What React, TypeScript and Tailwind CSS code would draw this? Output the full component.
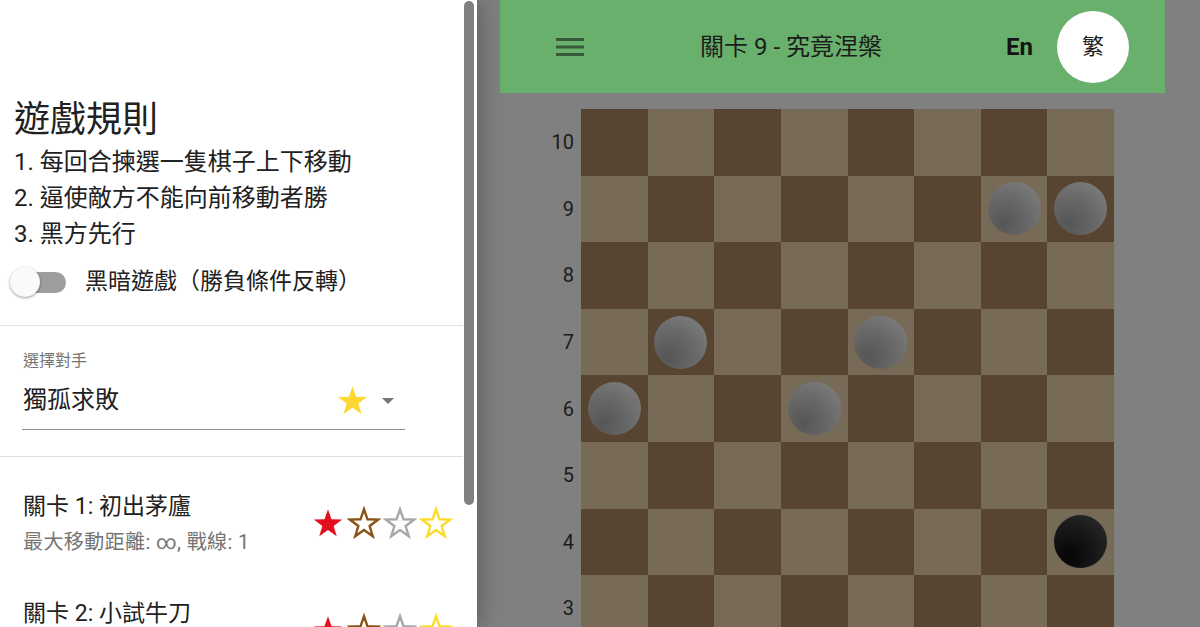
import React from 'react'

const STAR_POINTS = '12,2.3 14.47,9.4 21.99,9.56 15.99,14.1 18.17,21.29 12,17 5.83,21.29 8.01,14.1 2.01,9.56 9.53,9.4'

function Star({ color, filled, size = 34 }: { color: string; filled?: boolean; size?: number }) {
  return (
    <svg width={size} height={size} viewBox="0 0 24 24">
      {filled ? (
        <polygon points={STAR_POINTS} fill={color} />
      ) : (
        <polygon points={STAR_POINTS} fill="none" stroke={color} strokeWidth={1.7} strokeLinejoin="miter" />
      )}
    </svg>
  )
}

const levels = [
  { title: '關卡 1: 初出茅廬', sub: '最大移動距離: ∞, 戰線: 1' },
  { title: '關卡 2: 小試牛刀', sub: '最大移動距離: ∞, 戰線: 2' },
]

// 棋子位置 row-col
const greyPieces = ['9-6', '9-7', '7-1', '7-4', '6-0', '6-3']
const blackPieces = ['4-7']

function Board() {
  const rows = [10, 9, 8, 7, 6, 5, 4, 3, 2, 1]
  const cols = [0, 1, 2, 3, 4, 5, 6, 7]
  return (
    <div className="mt-[16px] flex">
      <div className="flex w-[81px] flex-col">
        {rows.map((r) => (
          <div key={r} className="flex h-[66.6px] items-center justify-end pr-[7px] text-[20px] text-[#1c1c1c]">
            {r}
          </div>
        ))}
      </div>
      <div className="grid w-[533px] grid-cols-8">
        {rows.map((r) =>
          cols.map((c) => {
            const dark = (r + c) % 2 === 0
            const key = `${r}-${c}`
            return (
              <div
                key={key}
                className={`flex h-[66.6px] items-center justify-center ${dark ? 'bg-[#574431]' : 'bg-[#776b58]'}`}
              >
                {greyPieces.includes(key) && (
                  <div className="h-[53px] w-[53px] rounded-full bg-[radial-gradient(circle_at_28%_78%,#565656_0%,#676767_45%,#7c7c7c_85%)]" />
                )}
                {blackPieces.includes(key) && (
                  <div className="h-[53px] w-[53px] rounded-full bg-[radial-gradient(circle_at_28%_78%,#050505_0%,#161616_45%,#262727_85%)]" />
                )}
              </div>
            )
          })
        )}
      </div>
    </div>
  )
}

export default function App() {
  return (
    <div
      className="flex h-[627px] w-[1200px] overflow-hidden bg-[#808080]"
      style={{ fontFamily: 'Roboto, "Noto Sans CJK TC", sans-serif' }}
    >
      {/* 側邊選單 */}
      <div className="relative z-10 w-[477px] shrink-0 bg-white shadow-[6px_0_18px_rgba(0,0,0,0.22)]">
        <div className="absolute left-[464px] top-[1px] h-[504px] w-[10px] rounded-full bg-[#808080]" />

        <div className="px-[14px] pt-[99px] text-[#212121]">
          <h2 className="text-[36px] leading-[42px]">遊戲規則</h2>
          <ol className="mt-[3px] text-[24px] leading-[36px]">
            <li>1. 每回合揀選一隻棋子上下移動</li>
            <li>2. 逼使敵方不能向前移動者勝</li>
            <li>3. 黑方先行</li>
          </ol>
          <div className="mt-[10px] flex h-[40px] items-center">
            <div className="relative h-[40px] w-[71px] shrink-0">
              <div className="absolute left-[1px] top-[10px] h-[21px] w-[51px] rounded-full bg-[#9e9e9e]" />
              <div className="absolute left-[-4px] top-[5px] h-[30px] w-[30px] rounded-full bg-[#fafafa] shadow-[0_1px_3px_rgba(0,0,0,0.4)]" />
            </div>
            <span className="text-[23px]">黑暗遊戲（勝負條件反轉）</span>
          </div>
        </div>

        <div className="mr-[14px] mt-[23px] h-px bg-[#e0e0e0]" />

        <div className="pl-[22px] pt-[25px]">
          <div className="pl-px text-[16px] leading-[20px] text-[#757575]">選擇對手</div>
          <div className="mt-[13px] flex w-[383px] items-start border-b border-[#8e8e8e] pb-[11px]">
            <span className="flex-1 pl-px text-[24px] leading-[32px] text-[#212121]">獨孤求敗</span>
            <div className="-mt-[1px]">
              <Star color="#fdd835" filled size={35} />
            </div>
            <svg width="12" height="32" viewBox="0 0 12 32" className="ml-[12px] mr-[11px]">
              <polygon points="0,14 12,14 6,20" fill="#757575" />
            </svg>
          </div>
        </div>

        <div className="mr-[14px] mt-[26px] h-px bg-[#e0e0e0]" />

        <div>
          {levels.map((lv) => (
            <div key={lv.title} className="flex h-[107px] items-start pl-[23px] pr-[24px] pt-[35px]">
              <div className="flex-1">
                <div className="text-[23px] leading-[30px] text-[#212121]">{lv.title}</div>
                <div className="mt-[7px] text-[20px] leading-[26px] tracking-[0.4px] text-[#757575]">{lv.sub}</div>
              </div>
              <div className="mt-[14px] flex gap-[2px]">
                <Star color="#e30f1e" filled />
                <Star color="#8b5216" />
                <Star color="#a8a8ab" />
                <Star color="#fddc2e" />
              </div>
            </div>
          ))}
        </div>
      </div>

      {/* 主畫面（被遮罩） */}
      <div className="flex-1 pl-[23px]">
        <div className="flex h-[93px] w-[665px] items-center bg-[#69b06c]">
          <button className="ml-[46px] flex h-[48px] w-[48px] items-center justify-center">
            <svg width="28" height="20" viewBox="0 0 28 20">
              <rect x="0" y="1" width="28" height="3" fill="#365a39" />
              <rect x="0" y="8.5" width="28" height="3" fill="#365a39" />
              <rect x="0" y="16" width="28" height="3" fill="#365a39" />
            </svg>
          </button>
          <div className="ml-[106px] text-[24px] text-[#1c1c1c]">關卡 9 - 究竟涅槃</div>
          <div className="flex-1" />
          <div className="mr-[24px] text-[24px] font-bold text-[#141414]">En</div>
          <div className="mr-[36px] flex h-[72px] w-[72px] items-center justify-center rounded-full bg-white text-[22px] text-[#1e1e1e]">
            繁
          </div>
        </div>
        <Board />
      </div>
    </div>
  )
}
